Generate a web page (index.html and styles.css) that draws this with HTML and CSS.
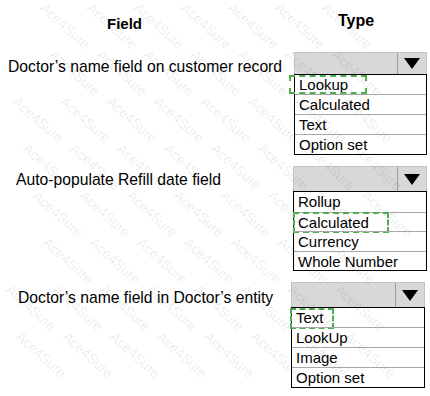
FILE: index.html
```html
<!DOCTYPE html>
<html lang="en">
<head>
    <meta charset="UTF-8">
    <meta name="viewport" content="width=device-width, initial-scale=1.0">
    <title>Field Type</title>
    <link rel="stylesheet" href="styles.css">
</head>
<body>

    <div class="sheet">
        <!-- Cabeçalho -->
        <div class="head">
            <div class="head-field">Field</div>
            <div class="head-type">Type</div>
        </div>

        <!-- Pergunta 1 -->
        <div class="q q1">
            <div class="q-label">Doctor’s name field on customer record</div>
            <div class="pick">
                <div class="pick-box"><span class="pick-btn"><i></i></span></div>
                <ul class="pick-list">
                    <li><span class="mark mark-lookup"></span>Lookup</li>
                    <li>Calculated</li>
                    <li>Text</li>
                    <li>Option set</li>
                </ul>
            </div>
        </div>

        <!-- Pergunta 2 -->
        <div class="q q2">
            <div class="q-label">Auto-populate Refill date field</div>
            <div class="pick">
                <div class="pick-box"><span class="pick-btn"><i></i></span></div>
                <ul class="pick-list">
                    <li>Rollup</li>
                    <li><span class="mark mark-calc"></span>Calculated</li>
                    <li>Currency</li>
                    <li>Whole Number</li>
                </ul>
            </div>
        </div>

        <!-- Pergunta 3 -->
        <div class="q q3">
            <div class="q-label">Doctor’s name field in Doctor’s entity</div>
            <div class="pick">
                <div class="pick-box"><span class="pick-btn"><i></i></span></div>
                <ul class="pick-list">
                    <li><span class="mark mark-text"></span>Text</li>
                    <li>LookUp</li>
                    <li>Image</li>
                    <li>Option set</li>
                </ul>
            </div>
        </div>

        <div class="wm" id="wm"></div>
    </div>

    <script src="script.js"></script>
</body>
</html>
```

FILE: styles.css
```css
* {
    margin: 0;
    padding: 0;
    box-sizing: border-box;
    font-family: "Liberation Sans", Arial, sans-serif;
}

body {
    background: #fff;
    color: #000;
}

.sheet {
    position: relative;
    width: 430px;
    height: 396px;
    overflow: hidden;
}

.head {
    display: flex;
    height: 52px;
    font-size: 15px;
    font-weight: 700;
}

.head-field {
    width: 250px;
    padding: 15px 0 0 107px;
}

.head-type {
    padding: 12px 0 0 88px;
    font-size: 16px;
}

.q {
    display: flex;
}

.q-label {
    flex: none;
    font-size: 15.7px;
    line-height: 18px;
}

.q1 .q-label {
    width: 294px;
    padding: 6px 0 0 8px;
}

.q2 {
    margin-top: 11px;
}

.q2 .q-label {
    width: 293px;
    padding: 5px 0 0 16px;
}

.q3 {
    margin-top: 11px;
}

.q3 .q-label {
    width: 291px;
    padding: 7px 0 0 18px;
}

.pick {
    width: 134px;
}

.q1 .pick {
    width: 133px;
}

.pick-box {
    display: flex;
    justify-content: flex-end;
    height: 22px;
    background-color: #d8d8d8;
    background-image: radial-gradient(#c6c6c6 0.6px, transparent 0.7px);
    background-size: 2px 2px;
    border: 1px solid #c4c4c4;
    border-bottom: none;
}

.q2 .pick-box,
.q3 .pick-box {
    height: 25px;
}

.pick-btn {
    display: flex;
    align-items: center;
    justify-content: center;
    width: 29px;
    border-left: 1px solid #9c9c9c;
}

.pick-btn i {
    width: 0;
    height: 0;
    border-left: 8px solid transparent;
    border-right: 8px solid transparent;
    border-top: 11px solid #000;
}

.pick-list {
    list-style: none;
    border: 1px solid #000;
    background: #fff;
    font-size: 15px;
}

.pick-list li {
    position: relative;
    height: 20px;
    line-height: 19px;
    padding-left: 4px;
    border-top: 1px solid #a8a8a8;
}

.pick-list li:first-child {
    height: 19px;
    border-top: none;
}

.q2 .pick-list li {
    height: 19.5px;
}

.q3 .pick-list li {
    line-height: 20px;
}

.mark {
    position: absolute;
    border: 2px dashed #4fae4f;
    pointer-events: none;
}

.mark-lookup {
    left: -6px;
    top: 0;
    width: 78px;
    height: 19px;
}

.mark-calc {
    left: -1px;
    top: -1px;
    width: 96px;
    height: 21px;
}

.mark-text {
    left: -2px;
    top: 0;
    width: 44px;
    height: 21px;
}

.wm {
    position: absolute;
    inset: 0;
    pointer-events: none;
}

.wm span {
    position: absolute;
    font-size: 14px;
    line-height: 14px;
    color: rgba(0, 0, 0, 0.09);
    transform: rotate(42deg);
    transform-origin: 0 0;
    white-space: nowrap;
}
```

FILE: script.js
```js
// marca d'água repetida, só onde cabe inteira
const wm = document.getElementById('wm');

for (let row = -2; row < 10; row++) {
    for (let col = -2; col < 11; col++) {
        const left = col * 47 + row * 10;
        const top = row * 47;

        if (left < 12 || left > 370 || top < 0 || top > 340) continue;

        const span = document.createElement('span');
        span.textContent = 'Ace4Sure';
        span.style.left = left + 'px';
        span.style.top = top + 'px';
        wm.appendChild(span);
    }
}
```
